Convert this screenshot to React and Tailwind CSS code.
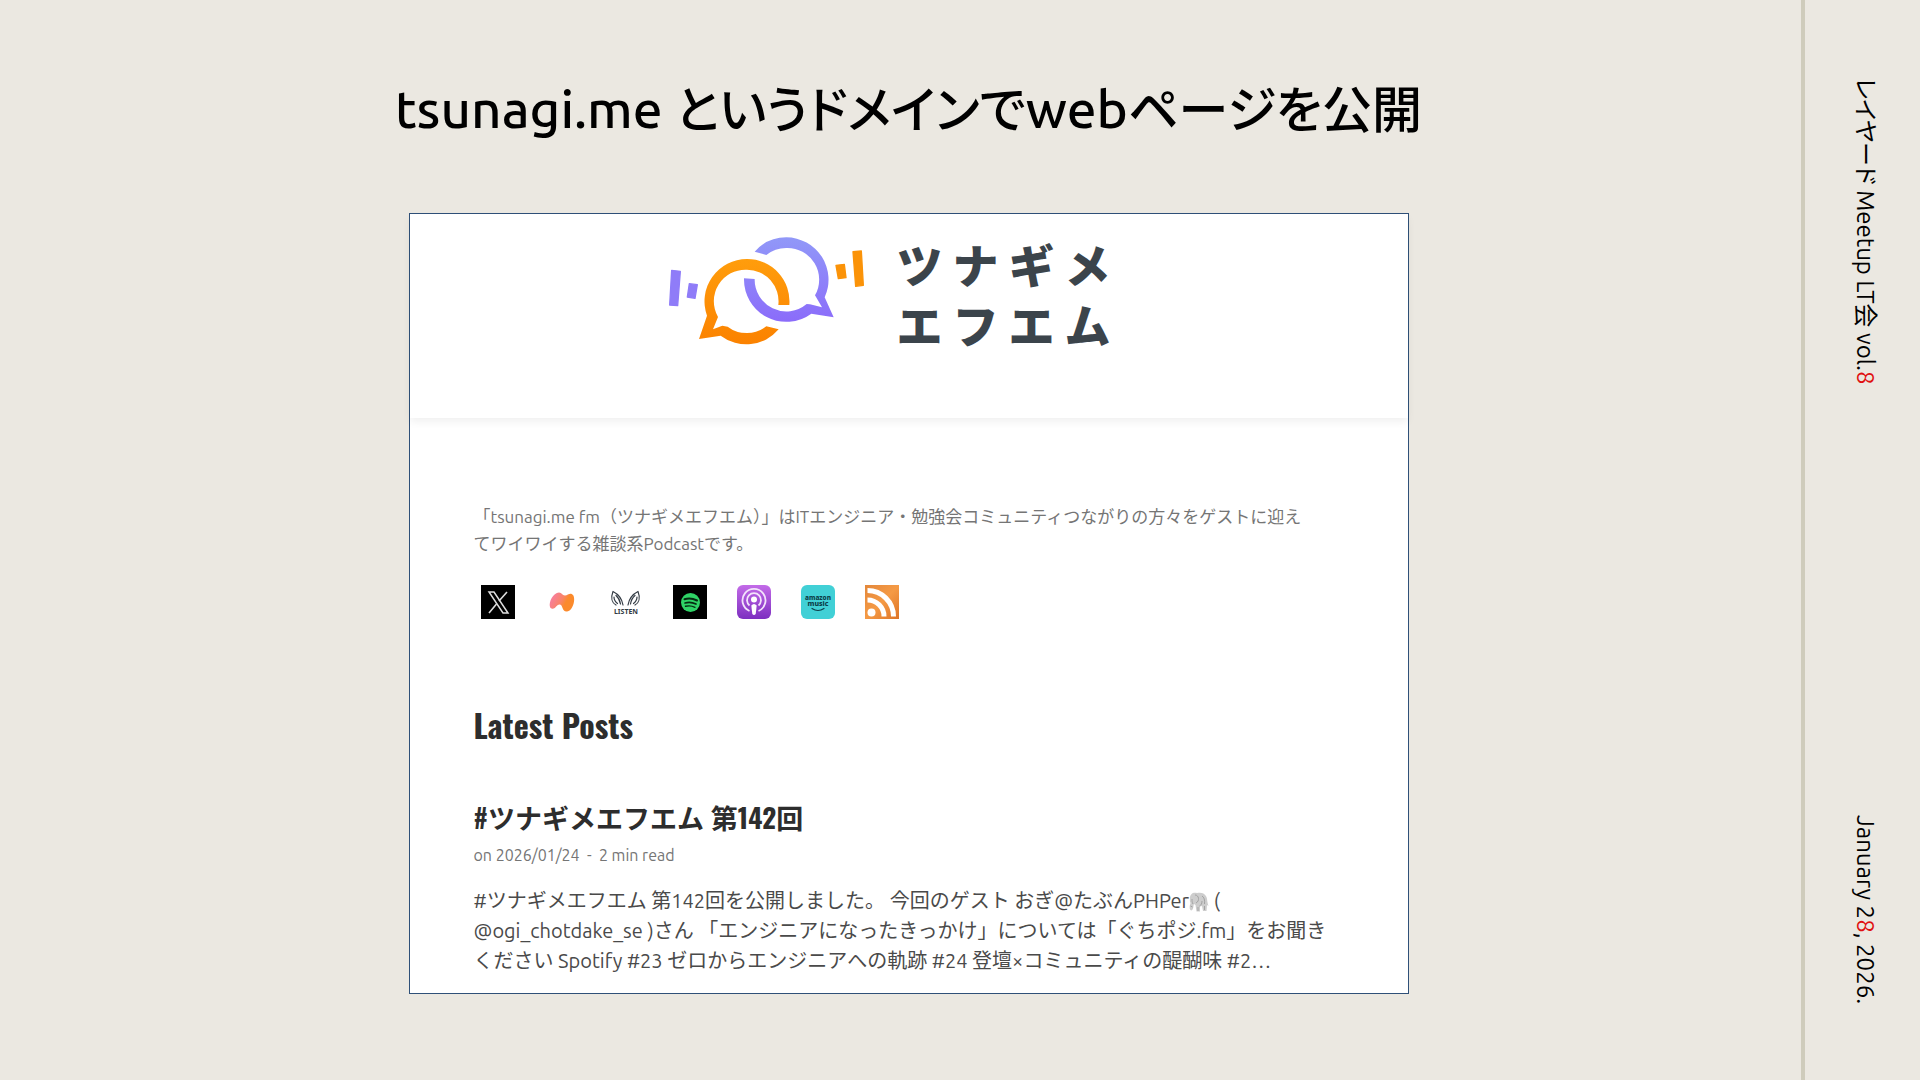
const jp = "font-['Ubuntu','Noto_Sans','Noto_Sans_CJK_JP',sans-serif]";

function LogoMark() {
  return (
    <svg viewBox="48 45 612 336" className="h-28 w-51" aria-hidden="true">
      <defs>
        <linearGradient id="orange" x1="0" y1="0" x2="0" y2="1">
          <stop offset="0" stopColor="#ff9d0c" />
          <stop offset="1" stopColor="#fb8200" />
        </linearGradient>
        <linearGradient id="violet" x1="0" y1="0" x2="0" y2="1">
          <stop offset="0" stopColor="#9198f8" />
          <stop offset="1" stopColor="#8b6cfa" />
        </linearGradient>
      </defs>
      <g strokeLinejoin="round" strokeWidth="4">
        <path
          d="M421 258A127 127 0 0 0 294 120A127 127 0 0 0 174 290L150 360L215 350A127 127 0 0 0 389 331L352 322A95 95 0 0 1 236 323L220 320L192 331L207 294A95 95 0 0 1 294 152A95 95 0 0 1 388 258Z"
          fill="url(#orange)"
        />
        <path
          d="M317 98A127 127 0 0 1 412 55A127 127 0 0 1 527 235L554 295L487 284A127 127 0 0 1 285 178L317 180A95 95 0 0 0 473 255L483 256L519 265L498 229A95 95 0 0 0 412 87A95 95 0 0 0 352 108Z"
          fill="url(#violet)"
        />
        <path d="M68 154L94 157L86 260L62 258ZM121 194L145 197L138 238L115 234Z" fill="#8f7cf8" stroke="#8f7cf8" />
        <path d="M561 139L586 136L591 176L568 179ZM612 98L637 96L643 199L620 202Z" fill="#fb9308" stroke="#fb9308" />
      </g>
    </svg>
  );
}

function XIcon() {
  return (
    <svg viewBox="0 0 34 34" className="size-full">
      <rect width="34" height="34" fill="#000" />
      <path d="M8 7h5l14 21h-5z" fill="none" stroke="#ddd" strokeWidth="1.5" />
      <path d="M26 7l-8 9M15.500 19L8 28" fill="none" stroke="#ddd" strokeWidth="1.600" />
    </svg>
  );
}

function BlobIcon() {
  return (
    <svg viewBox="0 0 34 34" className="size-full">
      <defs>
        <linearGradient id="blob" x1="0" y1="0.3" x2="1" y2="0.7">
          <stop offset="0.1" stopColor="#f77f97" />
          <stop offset="0.450" stopColor="#f98468" />
          <stop offset="0.650" stopColor="#fb8a2c" />
        </linearGradient>
      </defs>
      <path
        d="M5 22C3.500 17 8 8 14 7.500C17 7.500 17 10.500 20 10.500C23 10.500 25 7 28 10C31 14 28 26 22 26.500C17 27 18 20 15 19.500C12 19 11 23 8.500 23.500C7 24 5.500 23.500 5 22Z"
        fill="url(#blob)"
      />
    </svg>
  );
}

function ListenIcon() {
  return (
    <svg viewBox="0 0 34 34" className="size-full">
      <g fill="none" stroke="#333b44" strokeWidth="1.200" strokeLinecap="round">
        <path d="M4 6.500C1.500 13 3 18 7 20M4 6.500C9 9 13 14 14 20M7 10.500C10 13 11 16 11.500 19M5 12C5 15 6.500 17 8.500 18.500" />
        <path d="M29 6.500C31.500 13 30 18 26 20M29 6.500C24 9 20 14 19 20M26 10.500C23 13 22 16 21.500 19M28 12C28 15 26.500 17 24.500 18.500" />
      </g>
      <text x="17" y="28.500" textAnchor="middle" fontSize="7" fontWeight="700" fill="#333b44" fontFamily="'Noto Sans', sans-serif">
        LISTEN
      </text>
    </svg>
  );
}

function SpotifyIcon() {
  return (
    <svg viewBox="0 0 34 34" className="size-full">
      <rect width="34" height="34" fill="#000" />
      <circle cx="17.500" cy="17.500" r="9.500" fill="#2fd366" />
      <g fill="none" stroke="#062b12" strokeLinecap="round">
        <path d="M11.500 14.300Q17.500 12.300 24 15.500" strokeWidth="2" />
        <path d="M12 18Q17.500 16.300 23 19" strokeWidth="1.700" />
        <path d="M12.500 21.300Q17.500 20 22 22.300" strokeWidth="1.400" />
      </g>
    </svg>
  );
}

function PodcastsIcon() {
  return (
    <svg viewBox="0 0 34 34" className="size-full">
      <defs>
        <linearGradient id="pod" x1="0" y1="0" x2="0" y2="1">
          <stop offset="0" stopColor="#c36be8" />
          <stop offset="1" stopColor="#7d2fc0" />
        </linearGradient>
      </defs>
      <rect width="34" height="34" rx="6" fill="url(#pod)" />
      <g fill="none" stroke="#f3e3fb" strokeWidth="1.800">
        <path d="M12.500 26A11.500 11.500 0 1 1 21.500 26" />
        <path d="M12.500 20.500A7 7 0 1 1 21.500 20.500" />
      </g>
      <circle cx="17" cy="14.500" r="3" fill="#fff" />
      <path d="M14.300 20.500Q17 17.500 19.700 20.500L18.700 29Q17 31 15.300 29Z" fill="#fff" />
    </svg>
  );
}

function AmazonMusicIcon() {
  return (
    <svg viewBox="0 0 34 34" className="size-full">
      <rect width="34" height="34" rx="6" fill="#41d0d6" />
      <g textAnchor="middle" fontSize="7" fontWeight="800" fill="#0c3d48" fontFamily="'Noto Sans', sans-serif">
        <text x="17" y="14.500" fontSize="6.500">amazon</text>
        <text x="17" y="20.500">music</text>
      </g>
      <path d="M11 23.500Q17 27.500 23 23.500" fill="none" stroke="#0c3d48" strokeWidth="1.200" strokeLinecap="round" />
    </svg>
  );
}

function RssIcon() {
  return (
    <svg viewBox="0 0 34 34" className="size-full">
      <defs>
        <linearGradient id="rss" x1="0" y1="0" x2="1" y2="1">
          <stop offset="0" stopColor="#e3873a" />
          <stop offset="0.500" stopColor="#f59a45" />
          <stop offset="1" stopColor="#dd7426" />
        </linearGradient>
      </defs>
      <rect width="34" height="34" fill="url(#rss)" />
      <circle cx="6.500" cy="27.500" r="4" fill="#fff" />
      <path d="M2.500 15A16.500 16.500 0 0 1 19 31.500M2.500 5.500A26 26 0 0 1 28.500 31.500" fill="none" stroke="#fff" strokeWidth="5" />
    </svg>
  );
}

function Elephant() {
  return (
    <svg viewBox="0 0 20 20" className="inline-block size-5 align-[-4px]" role="img" aria-label="elephant">
      <path
        d="M1 6C1 2 4 0 8 1C12 0 16 1 17.500 5C18.500 8 18 10 19.500 14L18 13L17.500 19H14L13 14L11 14.500V19.500H7.500L6.500 13L5 12C4 14 5 17 2.500 18.500C0 18 .5 14 1.500 11C.5 9 1 8 1 6Z"
        fill="#cdcdcd"
      />
      <path d="M6 3C10 3 11 9 7 11M10.500 14C12 13 13 12 13 9M4 12C3 10 3 9 3 7M13 4C15 5 16 8 15.500 12M1.500 14L3.500 15M9 15V19M15.500 14V18" fill="none" stroke="#a3a3a3" />
    </svg>
  );
}

const services = [
  ["X", XIcon],
  ["Community", BlobIcon],
  ["LISTEN", ListenIcon],
  ["Spotify", SpotifyIcon],
  ["Apple Podcasts", PodcastsIcon],
  ["Amazon Music", AmazonMusicIcon],
  ["RSS", RssIcon],
];

export default function App() {
  return (
    <div lang="ja" className={`flex min-h-screen bg-[#ebe8e1] text-black ${jp}`}>
      <main className="flex flex-1 flex-col items-center pt-[71px] pl-4">
        <h1 className="text-[50px] leading-[76px] font-medium whitespace-nowrap [font-feature-settings:'palt']">
          <span className="text-[53px]">tsunagi.me </span>
          というドメインで
          <span className="text-[53px]">web</span>
          ページを公開
        </h1>

        <article className="mt-16.5 w-full max-w-[1000px] border border-[#2f5078] bg-white pb-[17px]">
          <header className="flex h-51 justify-center gap-7 pt-5 pr-8 shadow-[0_4px_8px_rgba(0,0,0,0.06)]">
            <LogoMark />
            <div
              aria-label="ツナギメエフエム"
              className="mt-0.5 grid h-30 w-56 grid-cols-4 text-[46px] leading-[60px] font-black text-[#3b444b]"
            >
              {[..."ツナギメエフエム"].map((c, i) => (
                <span key={i}>{c}</span>
              ))}
            </div>
          </header>

          <div className="px-16">
            <p className="mt-[85px] text-[17px] leading-[27px] whitespace-nowrap text-[#757575]">
              「tsunagi.me fm（ツナギメエフエム）」はITエンジニア・勉強会コミュニティつながりの方々をゲストに迎え
              <br />
              てワイワイする雑談系Podcastです。
            </p>

            <nav className="mt-7 flex gap-7.5 pl-[7px]">
              {services.map(([name, Icon]) => (
                <a key={name} href="#" aria-label={name} className="size-8.5">
                  <Icon />
                </a>
              ))}
            </nav>

            <h2 className="mt-20 font-['Oswald','Roboto_Condensed',sans-serif] text-[32px] leading-[52px] font-bold text-[#2d2d2d]">
              Latest Posts
            </h2>

            <section className="mt-10">
              <h3 className="font-['Oswald','Roboto_Condensed','Noto_Sans_CJK_JP',sans-serif] text-[27px] leading-[52px] font-bold whitespace-nowrap text-[#2d2d2d]">
                <a href="#">#ツナギメエフエム 第142回</a>
              </h3>
              <p className="text-[16px] leading-6 text-[#757575]">on 2026/01/24 &nbsp;-&nbsp; 2 min read</p>
              <p className="mt-[19px] text-[20px] leading-[30px] whitespace-nowrap text-[#4a4a4a]">
                #ツナギメエフエム 第142回を公開しました。 今回のゲスト おぎ@たぶんPHPer
                <Elephant /> (
                <br />
                @ogi_chotdake_se )さん 「エンジニアになったきっかけ」については「ぐちポジ.fm」をお聞き
                <br />
                ください Spotify #23 ゼロからエンジニアへの軌跡 #24 登壇×コミュニティの醍醐味 #2…
              </p>
            </section>
          </div>
        </article>
      </main>

      <aside className="flex w-[119px] flex-col items-center justify-between border-l-4 border-[#cfccbc] pt-19.5 pb-19 pl-1 text-[24px] leading-8 whitespace-nowrap [font-feature-settings:'palt']">
        <p className="[text-orientation:sideways] [writing-mode:vertical-rl]">
          レイヤード Meetup LT会 vol.<span className="text-[#e01010]">8</span>
        </p>
        <p className="[text-orientation:sideways] [writing-mode:vertical-rl]">
          January 2<span className="text-[#e01010]">8</span>, 2026.
        </p>
      </aside>
    </div>
  );
}
